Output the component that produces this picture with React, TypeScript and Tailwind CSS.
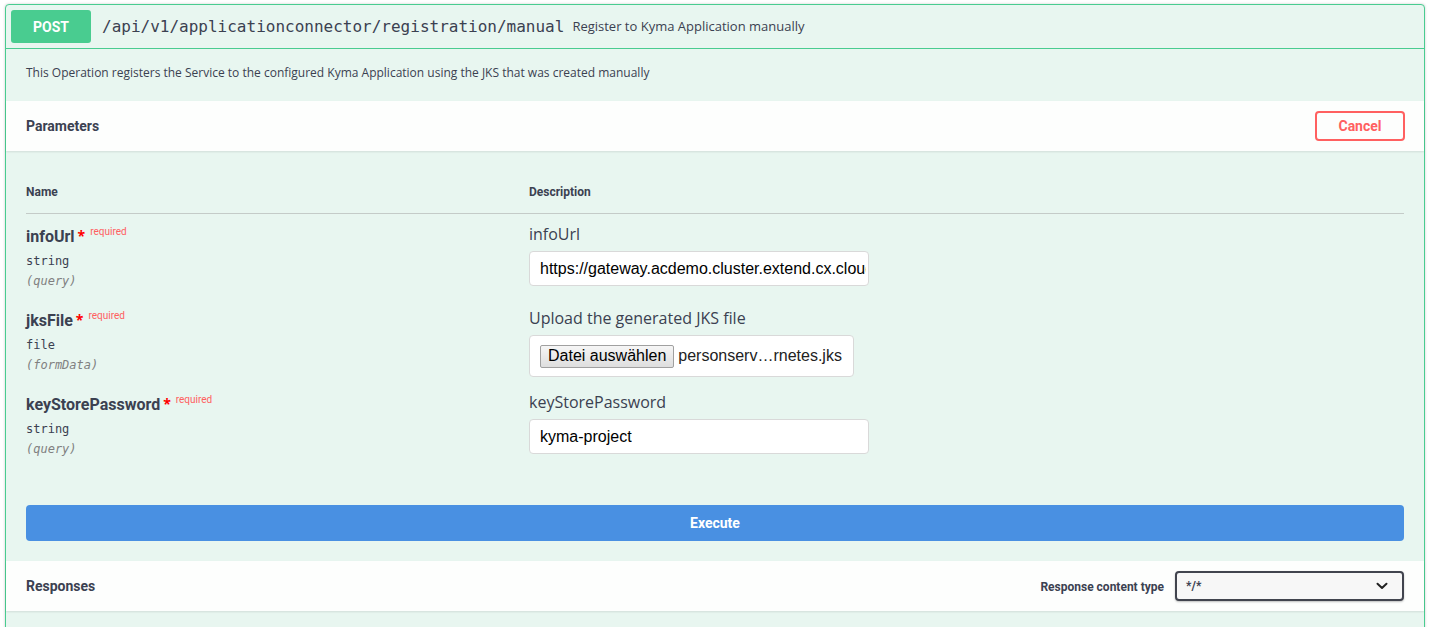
import React from 'react';

const TITLE = "font-['Roboto','Open_Sans',sans-serif]";
const MONO = "font-['DejaVu_Sans_Mono','Liberation_Mono',monospace]";

type Param = {
  name: string;
  type: string;
  location: string;
  label: string;
  kind: 'text' | 'file';
  value: string;
};

const params: Param[] = [
  {
    name: 'infoUrl',
    type: 'string',
    location: '(query)',
    label: 'infoUrl',
    kind: 'text',
    value: 'https://gateway.acdemo.cluster.extend.cx.cloud.sap/v1/applications/personservice/info',
  },
  {
    name: 'jksFile',
    type: 'file',
    location: '(formData)',
    label: 'Upload the generated JKS file',
    kind: 'file',
    value: 'personserv…rnetes.jks',
  },
  {
    name: 'keyStorePassword',
    type: 'string',
    location: '(query)',
    label: 'keyStorePassword',
    kind: 'text',
    value: 'kyma-project',
  },
];

const ParamRow: React.FC<{ p: Param }> = ({ p }) => (
  <div className="flex h-[84px] pt-[12px]">
    <div className="w-[503px] shrink-0">
      <div className="flex items-start">
        <span className={`${TITLE} text-[16px] font-bold leading-[22px] text-[#3b4151]`}>{p.name}</span>
        <span className="ml-[3px] text-[#ff0000] text-[14px] leading-[20px] font-bold">*</span>
        <span className={`${TITLE} ml-[5px] text-[10px] leading-[12px] text-[#ff6060]`}>required</span>
      </div>
      <div className={`${MONO} text-[12px] text-[#3b4151] mt-[4px] leading-[18px]`}>{p.type}</div>
      <div className={`${MONO} text-[12px] italic text-[#808080] mt-[2px] leading-[18px]`}>{p.location}</div>
    </div>
    <div className="flex-1">
      <div className="font-['Open_Sans',sans-serif] text-[16px] leading-[22px] text-[#3b4151] -mt-[3px]">{p.label}</div>
      {p.kind === 'text' ? (
        <div className="mt-[6px] w-[340px] h-[35px] bg-white border border-[#d9d9d9] rounded-[4px] pl-[10px] pr-[2px] flex items-center overflow-hidden">
          <span className="font-['Liberation_Sans',Arial,sans-serif] text-[16px] text-black whitespace-nowrap overflow-hidden">{p.value}</span>
        </div>
      ) : (
        <div className="mt-[6px] w-[325px] h-[42px] bg-white border border-[#d9d9d9] rounded-[4px] pl-[10px] flex items-center gap-[4px]">
          <span className="h-[23px] px-[7px] flex items-center bg-gradient-to-b from-[#f6f6f6] to-[#dedede] border border-[#a0a0a0] rounded-[2px] font-['Liberation_Sans',Arial,sans-serif] text-[16px] text-black">
            Datei auswählen
          </span>
          <span className="font-['Liberation_Sans',Arial,sans-serif] text-[16px] text-[#222]">{p.value}</span>
        </div>
      )}
    </div>
  </div>
);

const App: React.FC = () => {
  return (
    <div className="min-h-screen bg-white pt-[4px] px-[5px] w-[1430px]">
      <div className="w-[1420px] border border-[#49cc90] rounded-t-[4px] bg-[#e8f6f0] text-[#3b4151] min-h-[640px] shadow-[0_0_3px_rgba(0,0,0,0.19)]">
        {/* summary */}
        <div className="h-[44px] flex items-center px-[5px] border-b border-[#49cc90]">
          <div className={`${TITLE} w-[80px] h-[33px] rounded-[3px] bg-[#49cc90] text-white font-bold text-[14px] flex items-center justify-center pt-[2px]`}>
            POST
          </div>
          <span className={`${MONO} ml-[11px] text-[16px] text-[#3b4151] pt-[1px]`}>/api/v1/applicationconnector/registration/manual</span>
          <span className="font-['Open_Sans',sans-serif] ml-[8px] text-[13px] text-[#3b4151] pt-[1px]">Register to Kyma Application manually</span>
        </div>

        {/* description */}
        <div className="h-[52px] flex items-center px-[20px]">
          <p className="font-['Open_Sans',sans-serif] text-[12px] text-[#3b4151] -mt-[4px]">
            This Operation registers the Service to the configured Kyma Application using the JKS that was created manually
          </p>
        </div>

        {/* parameters header */}
        <div className="h-[50px] bg-[#fdfefd] shadow-[0_1px_2px_rgba(0,0,0,0.1)] flex items-center justify-between px-[20px]">
          <h4 className={`${TITLE} text-[14px] font-bold text-[#3b4151] pt-[1px]`}>Parameters</h4>
          <button className={`${TITLE} w-[90px] h-[30px] border-2 border-[#ff6060] rounded-[4px] text-[#ff6060] font-bold text-[14px] bg-transparent mr-[-1px]`}>
            Cancel
          </button>
        </div>

        {/* table */}
        <div className="px-[20px] pt-[32px]">
          <div className={`${TITLE} flex text-[12px] font-bold text-[#3b4151] pb-[12px] border-b border-[#c4cbc8]`}>
            <div className="w-[503px]">Name</div>
            <div>Description</div>
          </div>
          {params.map((p) => (
            <ParamRow key={p.name} p={p} />
          ))}
        </div>

        {/* execute */}
        <div className="px-[20px] pt-[39px] pb-[20px]">
          <button className={`${TITLE} w-full h-[36px] bg-[#4990e2] rounded-[4px] text-white font-bold text-[14px]`}>
            Execute
          </button>
        </div>

        {/* responses */}
        <div className="h-[50px] bg-[#fdfefd] shadow-[0_1px_2px_rgba(0,0,0,0.1)] flex items-center justify-between px-[20px]">
          <h4 className={`${TITLE} text-[14px] font-bold text-[#3b4151] pt-[1px]`}>Responses</h4>
          <div className="flex items-center">
            <span className={`${TITLE} text-[12px] font-bold text-[#3b4151] mr-[11px] pt-[1px]`}>Response content type</span>
            <div className={`${TITLE} w-[229px] h-[30px] border-2 border-[#41444e] rounded-[4px] bg-[#f7f7f7] flex items-center justify-between pl-[9px] pr-[14px] text-[12px] font-bold text-[#3b4151] shadow-[0_1px_2px_rgba(0,0,0,0.25)]`}>
              <span>*/*</span>
              <svg width="12" height="8" viewBox="0 0 12 8" fill="none">
                <path d="M1.5 1.8 L6 6 L10.5 1.8" stroke="#222" strokeWidth="2" strokeLinecap="round" strokeLinejoin="round" />
              </svg>
            </div>
          </div>
        </div>
      </div>
    </div>
  );
};

export default App;
